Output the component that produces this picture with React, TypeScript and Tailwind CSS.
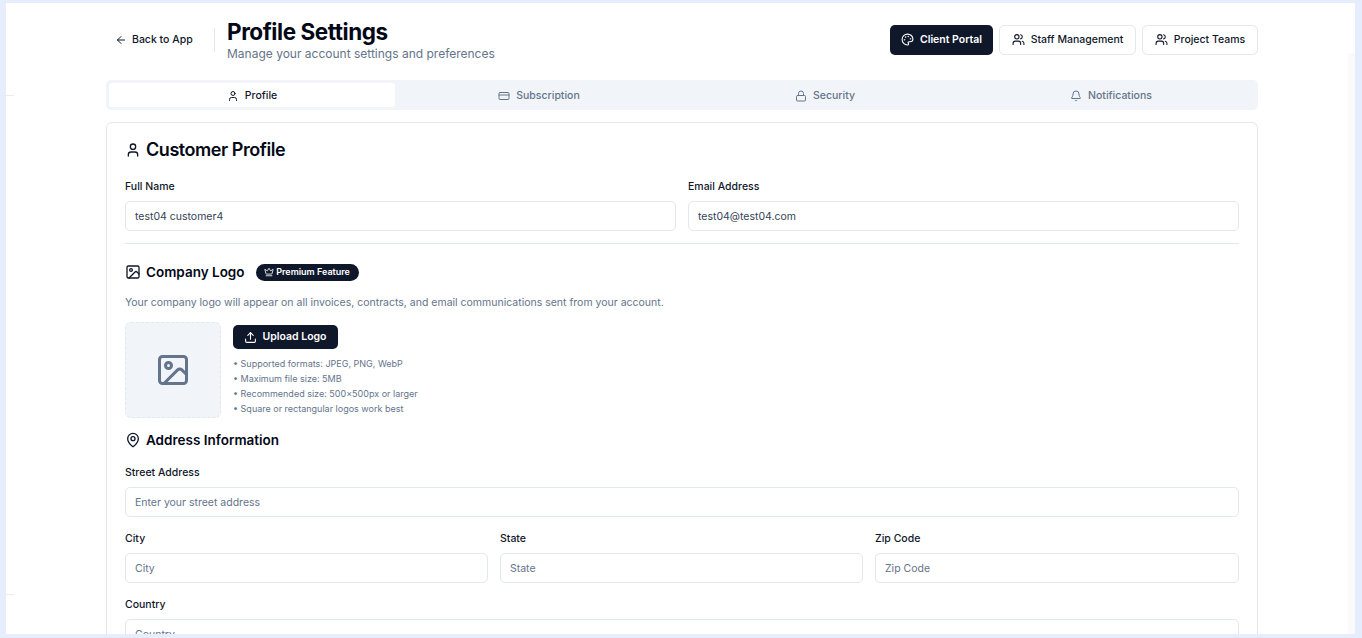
import { ArrowLeft, Bell, CreditCard, Crown, Image, Lock, MapPin, Palette, Upload, User, Users } from 'lucide-react'

const TABS = [
  { label: 'Profile', icon: User, active: true },
  { label: 'Subscription', icon: CreditCard },
  { label: 'Security', icon: Lock },
  { label: 'Notifications', icon: Bell },
]

const TIPS = [
  'Supported formats: JPEG, PNG, WebP',
  'Maximum file size: 5MB',
  'Recommended size: 500×500px or larger',
  'Square or rectangular logos work best',
]

function Field({ label, value, placeholder }: { label: string; value?: string; placeholder?: string }) {
  return (
    <div className="flex flex-col">
      <label className="text-[10.5px] leading-[14px] font-medium text-[#0f172a]">{label}</label>
      <input
        readOnly
        value={value ?? ''}
        placeholder={placeholder}
        className="mt-[7px] h-[30px] w-full rounded-[5px] border border-[#e2e8f0] bg-white px-[9px] text-[10.5px] text-[#334155] outline-none placeholder:text-[#64748b]"
      />
    </div>
  )
}

export default function App() {
  return (
    <div className="h-[638px] overflow-hidden bg-[#e6eefd] pt-[3px] pb-[4px] pl-[6px] pr-[7px] font-['Inter',sans-serif]">
      <div className="relative h-[631px] overflow-hidden bg-white">
        {/* leftover rules at the page edges */}
        <div className="absolute left-0 top-[92px] h-px w-[8px] bg-[#e8ecf2]" />
        <div className="absolute left-0 top-[591px] h-px w-[8px] bg-[#e8ecf2]" />
        <div className="absolute right-0 top-[50px] bottom-0 w-[7px] bg-[#fafafa]" />

        <div className="ml-[100px] w-[1152px]">
          {/* header */}
          <div className="flex h-[77px] items-center justify-between pb-[4px]">
            <div className="flex items-center">
              <a className="flex w-[108px] items-center gap-[5px] pl-[9px] text-[10.5px] font-medium text-[#0f172a]">
                <ArrowLeft className="h-[12px] w-[12px]" />
                Back to App
              </a>
              <div className="h-[24px] w-px bg-[#e2e8f0]" />
              <div className="ml-[12px]">
                <h1 className="text-[22.5px] leading-[28px] font-bold tracking-[-0.45px] text-[#020817]">Profile Settings</h1>
                <p className="text-[12px] leading-[16px] text-[#64748b]">Manage your account settings and preferences</p>
              </div>
            </div>
            <div className="flex items-center gap-[6px]">
              <button className="flex h-[30px] w-[103px] items-center justify-center gap-[6px] rounded-[5px] bg-[#0f172a] text-[10.5px] font-semibold text-white">
                <Palette className="h-[13px] w-[13px]" />
                Client Portal
              </button>
              <button className="flex h-[30px] w-[137px] items-center justify-center gap-[6px] rounded-[5px] border border-[#e2e8f0] bg-white text-[10.5px] font-medium text-[#0f172a]">
                <Users className="h-[13px] w-[13px]" />
                Staff Management
              </button>
              <button className="flex h-[30px] w-[116px] items-center justify-center gap-[6px] rounded-[5px] border border-[#e2e8f0] bg-white text-[10.5px] font-medium text-[#0f172a]">
                <Users className="h-[13px] w-[13px]" />
                Project Teams
              </button>
            </div>
          </div>

          {/* tabs */}
          <div className="grid h-[30px] grid-cols-[repeat(4,286px)] rounded-[5px] bg-[#f1f5f9] p-[3px]">
            {TABS.map(tab => (
              <div
                key={tab.label}
                className={
                  tab.active
                    ? 'flex items-center justify-center gap-[6px] rounded-[3px] bg-white pt-[1px] text-[10.5px] font-medium text-[#0f172a]'
                    : 'flex items-center justify-center gap-[6px] pt-[1px] pl-[2px] text-[10.5px] font-medium text-[#64748b]'
                }
              >
                <tab.icon className="h-[12px] w-[12px]" />
                {tab.label}
              </div>
            ))}
          </div>

          {/* card */}
          <div className="mt-[12px] h-[700px] rounded-[6px] border border-[#e2e8f0] bg-white px-[18px] pt-[14px]">
            <div className="flex items-center gap-[5px]">
              <User className="h-[16px] w-[16px] text-[#0f172a]" />
              <h2 className="text-[18px] leading-[26px] font-semibold tracking-[-0.45px] text-[#020817]">Customer Profile</h2>
            </div>

            <div className="mt-[17px] grid grid-cols-2 gap-[12px]">
              <Field label="Full Name" value="test04 customer4" />
              <Field label="Email Address" value="test04@test04.com" />
            </div>

            <div className="mt-[12px] h-px bg-[#e2e8f0]" />

            <div className="mt-[17px] flex items-center">
              <Image className="h-[16px] w-[16px] text-[#0f172a]" />
              <h3 className="ml-[5px] text-[13.5px] leading-[22px] font-semibold text-[#020817]">Company Logo</h3>
              <span className="ml-[11px] flex h-[17px] w-[103px] items-center justify-center gap-[2px] rounded-full bg-[#0f172a] text-[9px] font-semibold text-white">
                <Crown className="h-[10px] w-[10px]" />
                Premium Feature
              </span>
            </div>

            <p className="mt-[13px] text-[10.5px] leading-[14px] text-[#64748b]">
              Your company logo will appear on all invoices, contracts, and email communications sent from your account.
            </p>

            <div className="mt-[12px] flex">
              <div className="flex h-[96px] w-[96px] items-center justify-center rounded-[6px] border border-dashed border-[#e2e8f0] bg-[#f1f5f9]">
                <Image className="h-[36px] w-[36px] text-[#64748b]" />
              </div>
              <div className="ml-[12px] pt-[3px]">
                <button className="flex h-[24px] w-[105px] items-center justify-center gap-[5px] rounded-[5px] bg-[#0f172a] text-[10.5px] font-semibold text-white">
                  <Upload className="h-[13px] w-[13px]" />
                  Upload Logo
                </button>
                <ul className="mt-[7px] text-[9px] leading-[15px] text-[#64748b]">
                  {TIPS.map(tip => (
                    <li key={tip}>• {tip}</li>
                  ))}
                </ul>
              </div>
            </div>

            <div className="mt-[11px] flex items-center gap-[5px]">
              <MapPin className="h-[16px] w-[16px] text-[#0f172a]" />
              <h3 className="text-[13.5px] leading-[22px] font-semibold text-[#020817]">Address Information</h3>
            </div>

            <div className="mt-[15px]">
              <Field label="Street Address" placeholder="Enter your street address" />
            </div>

            <div className="mt-[15px] grid grid-cols-[363px_363px_1fr] gap-[12px]">
              <Field label="City" placeholder="City" />
              <Field label="State" placeholder="State" />
              <Field label="Zip Code" placeholder="Zip Code" />
            </div>

            <div className="mt-[15px]">
              <Field label="Country" placeholder="Country" />
            </div>
          </div>
        </div>
      </div>
    </div>
  )
}
